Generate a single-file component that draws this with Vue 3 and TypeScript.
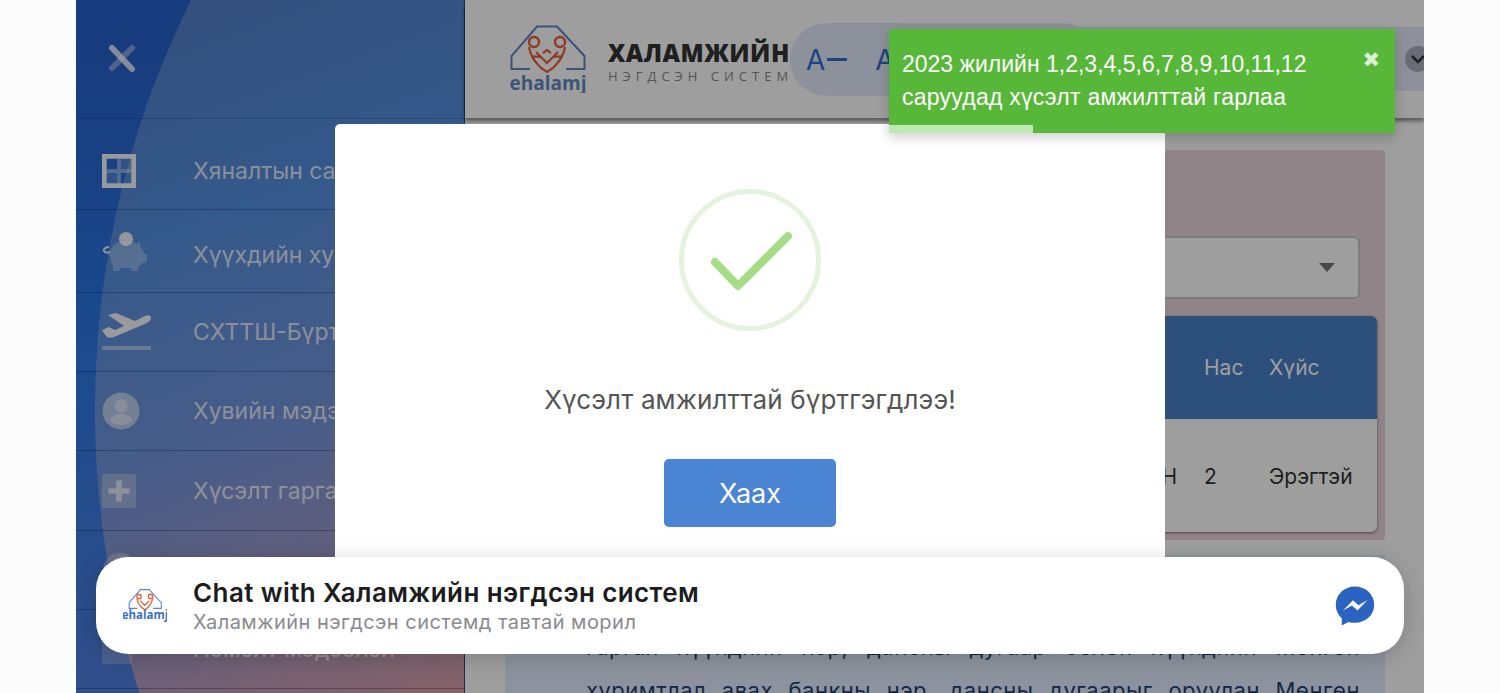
<script setup lang="ts">
const menu = [
  { label: 'Хяналтын самбар', icon: 'grid' },
  { label: 'Хүүхдийн хуримтлал', icon: 'piggy' },
  { label: 'СХТТШ-Бүртгэл', icon: 'plane' },
  { label: 'Хувийн мэдээлэл', icon: 'user' },
  { label: 'Хүсэлт гаргах', icon: 'plus' },
  { label: 'Тусламж', icon: 'help' },
  { label: 'Нэмэлт мэдээлэл', icon: 'info' },
];
</script>

<template>
  <div class="screen">
    <div class="page">
      <aside class="sidebar">
        <div class="arc"></div>
        <div class="side-head">
          <svg width="30" height="30" viewBox="0 0 30 30">
            <path d="M25 4 L5 24" stroke="#fff" stroke-opacity=".4" stroke-width="6" stroke-linecap="round" />
            <path d="M5 4 L25 25" stroke="#fff" stroke-opacity=".8" stroke-width="6" stroke-linecap="round" />
          </svg>
        </div>
        <div v-for="item in menu" :key="item.label" class="side-row">
          <span class="side-icon">
            <svg v-if="item.icon === 'grid'" width="34" height="34" viewBox="0 0 36 36">
              <path fill="#fff" fill-opacity=".95" fill-rule="evenodd" d="M0 0h36v36H0z M5 5v26h26V5z" />
              <path fill="#fff" fill-opacity=".45" d="M16 5h4v26h-4z M5 16h11v4H5z M20 16h11v4H20z" />
              <path fill="#fff" fill-opacity=".18" d="M20 5h11v11H20z M5 20h11v11H5z" />
            </svg>
            <svg v-else-if="item.icon === 'piggy'" class="piggy" width="46" height="40" viewBox="0 0 46 40">
              <circle cx="24" cy="7" r="7" fill="#fff" fill-opacity=".9" />
              <path fill="#fff" fill-opacity=".32" d="M8 21C9 13 16 9 24 9c5 0 8 1 11 3l3-3 1 8c2 1 3 3 3 5h3v8l-5 1c-1 2-2 3-4 4v4h-7v-3H18v3h-7v-5c-2-3-3-7-3-14z" />
              <path d="M7 15c-3 0-6 2-5 4 1 2 3 2 6 1" fill="none" stroke="#fff" stroke-opacity=".9" stroke-width="2" />
            </svg>
            <svg v-else-if="item.icon === 'plane'" width="50" height="38" viewBox="0 0 50 38">
              <path fill="#fff" fill-opacity=".95" d="M0 17l7-3 6 3 9-4L6 2l8-2 19 8 10-5q6-2 6 2 0 3-6 6L12 24q-6 2-8-1z" />
              <rect x="0" y="33" width="49" height="4" fill="#fff" fill-opacity=".45" />
            </svg>
            <svg v-else-if="item.icon === 'user'" width="38" height="38" viewBox="0 0 38 38">
              <circle cx="19" cy="19" r="18.500" fill="#fff" fill-opacity=".55" />
              <circle cx="19" cy="14" r="6.500" fill="#fff" fill-opacity=".5" />
              <path d="M8 28c2-5 7-6 11-6s9 1 11 6c-3 4-7 5-11 5s-8-1-11-5z" fill="#fff" fill-opacity=".5" />
            </svg>
            <svg v-else-if="item.icon === 'plus'" width="34" height="34" viewBox="0 0 36 36">
              <rect width="36" height="36" rx="3" fill="#fff" fill-opacity=".3" />
              <path d="M15 7h6v8h8v6h-8v8h-6v-8H7v-6h8z" fill="#fff" fill-opacity=".7" />
            </svg>
            <svg v-else-if="item.icon === 'help'" width="36" height="36" viewBox="0 0 36 36">
              <circle cx="18" cy="18" r="17" fill="#fff" fill-opacity=".35" />
            </svg>
            <svg v-else width="30" height="30" viewBox="0 0 30 30">
              <rect width="30" height="30" rx="2" fill="#fff" fill-opacity=".25" />
              <rect x="5" y="9" width="4" height="4" fill="#fff" fill-opacity=".7" />
              <rect x="12" y="10" width="12" height="2" fill="#000" fill-opacity=".3" />
            </svg>
          </span>
          <span class="side-label">{{ item.label }}</span>
        </div>
      </aside>

      <main class="main">
        <header class="topbar">
          <svg class="logo" width="76" height="68" viewBox="0 0 76 68">
            <path d="M20 44H1.500V31L27 1.500H47L74.500 31V44H56" fill="none" stroke="#5f86c4" stroke-width="2" />
            <circle cx="24" cy="17" r="5" fill="none" stroke="#e8603a" stroke-width="2.500" />
            <circle cx="50" cy="17" r="5" fill="none" stroke="#e8603a" stroke-width="2.500" />
            <path d="M19 22c2 13 9 17 12 21l6 4 6-4c3-4 10-8 12-21M26 27l11 11 11-11M32 33c-3-3-6 0-9-2M42 33c3-3 6 0 9-2M33 28l4-3 4 3" fill="none" stroke="#e8603a" stroke-width="2.200" />
            <text x="38" y="65" text-anchor="middle" class="logo-word">ehalamj</text>
          </svg>
          <div class="brand">
            <div class="brand-name">ХАЛАМЖИЙН</div>
            <div class="brand-sub">НЭГДСЭН СИСТЕМ</div>
          </div>
          <div class="font-pill">
            <span class="font-btn">A<i class="minus"></i></span>
            <span class="font-btn">A</span>
          </div>
          <div class="user-pill">
            <span class="chevron">
              <svg width="20" height="20" viewBox="0 0 20 20">
                <path d="M4 7l6 6 6-6" fill="none" stroke="#333" stroke-width="2.500" />
              </svg>
            </span>
          </div>
        </header>

        <section class="content">
          <div class="panel">
            <div class="select"><span class="caret"></span></div>
            <div class="table">
              <div class="table-head">
                <span class="col-age">Нас</span>
                <span class="col-sex">Хүйс</span>
              </div>
              <div class="table-row">
                <span class="col-name">Н</span>
                <span class="col-age">2</span>
                <span class="col-sex">Эрэгтэй</span>
              </div>
            </div>
          </div>
          <div class="note">
            <p>гаргах хүүхдийн нэр, дансны дугаар бөлөн хүүхдийн Мөнгөн</p>
            <p>хуримтлал авах банкны нэр, дансны дугаарыг оруулан Мөнгөн</p>
          </div>
        </section>
      </main>

      <div class="backdrop"></div>

      <div class="modal">
        <svg width="142" height="142" viewBox="0 0 142 142">
          <circle cx="71" cy="71" r="68.500" fill="none" stroke="#e5f3dc" stroke-width="5" />
          <path d="M36 73 L59 97 L109 47" fill="none" stroke="#a5dc86" stroke-width="8" stroke-linecap="round" stroke-linejoin="round" />
        </svg>
        <div class="modal-text">Хүсэлт амжилттай бүртгэгдлээ!</div>
        <button class="modal-btn">Хаах</button>
      </div>

      <div class="toast">
        <div class="toast-text">2023 жилийн 1,2,3,4,5,6,7,8,9,10,11,12</div>
        <div class="toast-text toast-line2">саруудад хүсэлт амжилттай гарлаа</div>
        <span class="toast-close">✖</span>
        <div class="toast-bar"></div>
      </div>

      <div class="chat">
        <svg class="chat-logo" width="44" height="36" viewBox="0 0 44 36">
          <g transform="translate(5.500 1) scale(.44)">
            <path d="M20 44H1.500V31L27 1.500H47L74.500 31V44H56" fill="none" stroke="#5f86c4" stroke-width="2.500" />
            <circle cx="24" cy="17" r="5" fill="none" stroke="#e8603a" stroke-width="3" />
            <circle cx="50" cy="17" r="5" fill="none" stroke="#e8603a" stroke-width="3" />
            <path d="M19 22c2 13 9 17 12 21l6 4 6-4c3-4 10-8 12-21M27 27l10 10 10-10" fill="none" stroke="#e8603a" stroke-width="3" />
          </g>
          <text x="22" y="31" text-anchor="middle" class="chat-word">ehalamj</text>
        </svg>
        <div class="chat-body">
          <div class="chat-title">Chat with Халамжийн нэгдсэн систем</div>
          <div class="chat-sub">Халамжийн нэгдсэн системд тавтай морил</div>
        </div>
        <svg width="40" height="40" viewBox="0 0 40 40">
          <path fill="#2a63c0" d="M20 .5C9.200.5 .8 8.300 .8 18.800c0 5.400 2.300 10.200 6 13.500v7.200l6.500-3.600c2.100.6 4.400.9 6.700.9 10.800 0 19.200-7.800 19.200-18S30.800.5 20 .5z" />
          <path fill="#fff" d="M8 24.500l10-10.300 5.500 5 9-5.200-10 10.600-5.500-5.200z" />
        </svg>
      </div>
    </div>
  </div>
</template>

<style scoped>
.screen {
  display: flex;
  justify-content: center;
  height: 693px;
  overflow: hidden;
  background: #fcfcfc;
  font-family: Inter, "Noto Sans", sans-serif;
}
.page {
  position: relative;
  display: flex;
  width: 1348px;
  height: 693px;
  overflow: hidden;
  background: #fff;
}

.sidebar {
  position: relative;
  flex: 0 0 389px;
  box-sizing: border-box;
  overflow: hidden;
  background: linear-gradient(180deg, #265fc8 0%, #2c78e8 50%, #5080e0 100%);
  border-right: 1px solid #2c4a78;
}
.arc {
  position: absolute;
  inset: 0;
  clip-path: circle(923px at 942px 410px);
  background: linear-gradient(160deg, #5480c8 0%, #5590e0 32%, #7596dc 60%, #a59ac8 80%, #dba0a8 100%);
}
.side-head {
  position: relative;
  display: flex;
  align-items: center;
  box-sizing: border-box;
  height: 119px;
  padding-left: 31px;
  border-bottom: 1px solid rgba(0, 20, 60, 0.2);
}
.side-row {
  position: relative;
  display: grid;
  grid-template-columns: 91px 1fr;
  align-items: center;
  box-sizing: border-box;
  height: 79px;
  padding-left: 26px;
  border-bottom: 1px solid rgba(0, 20, 60, 0.3);
  color: #fff;
}
.side-head + .side-row {
  height: 91px;
  padding-top: 14px;
}
.side-head + .side-row + .side-row {
  height: 83px;
  padding-top: 8px;
}
.side-row:nth-child(7) {
  height: 80px;
}
.side-icon {
  display: flex;
  align-items: center;
}
.piggy {
  margin-top: -6px;
}
.side-label {
  font-size: 23px;
  opacity: 0.8;
  white-space: nowrap;
}

.main {
  flex: 1;
  display: flex;
  flex-direction: column;
  min-width: 0;
  background: #fff;
}
.topbar {
  position: relative;
  display: flex;
  align-items: flex-start;
  flex: 0 0 118px;
  box-sizing: border-box;
  padding: 25px 0 0 45px;
  background: #fff;
  box-shadow: 0 3px 4px rgba(0, 0, 0, 0.45);
}
.logo {
  flex: none;
}
.logo-word {
  font-family: "Open Sans", sans-serif;
  font-size: 19px;
  font-weight: 700;
  fill: #5f86c4;
}
.chat-word {
  font-family: "Open Sans", sans-serif;
  font-size: 11.500px;
  font-weight: 700;
  fill: #3a6fc8;
}
.brand {
  margin: 14px 0 0 22px;
  width: 184px;
  flex: none;
  white-space: nowrap;
  font-family: "Open Sans", sans-serif;
}
.brand-name {
  font-size: 24px;
  line-height: 28px;
  font-weight: 800;
  letter-spacing: 0.5px;
  color: #333;
}
.brand-sub {
  margin-top: 1px;
  font-size: 13px;
  line-height: 16px;
  font-weight: 500;
  letter-spacing: 5px;
  color: #888;
}
.font-pill {
  display: flex;
  align-items: center;
  gap: 28px;
  flex: none;
  width: 310px;
  height: 73px;
  margin: -2px 0 0 -2px;
  padding-left: 16px;
  box-sizing: border-box;
  border-radius: 37px;
  background: #e2ebfb;
}
.font-btn {
  display: flex;
  align-items: center;
  gap: 2px;
  font-size: 28px;
  color: #2f6ecf;
}
.minus {
  width: 20px;
  height: 3px;
  background: #2f6ecf;
}
.user-pill {
  display: flex;
  align-items: center;
  justify-content: flex-end;
  flex: 1;
  height: 64px;
  margin: 2px 0 0 -66px;
  border-radius: 32px 0 0 32px;
  background: #e2ebfb;
}
.chevron {
  display: flex;
  align-items: center;
  justify-content: center;
  width: 26px;
  height: 26px;
  margin-right: -7px;
  border-radius: 50%;
  background: #a8aebb;
}

.content {
  display: flex;
  flex-direction: column;
  gap: 15px;
  padding: 32px 39px 0 40px;
}
.panel {
  height: 390px;
  padding-top: 86px;
  box-sizing: border-box;
  border-radius: 4px;
  background: #ebd5de;
}
.select {
  display: flex;
  align-items: center;
  justify-content: flex-end;
  box-sizing: border-box;
  height: 63px;
  margin-right: 25px;
  padding-right: 23px;
  border: 2px solid #c9c9c9;
  border-radius: 6px;
  background: #fff;
}
.caret {
  width: 0;
  height: 0;
  border-left: 8px solid transparent;
  border-right: 8px solid transparent;
  border-top: 9px solid #777;
}
.table {
  margin: 17px 8px 0 0;
  border-radius: 6px;
  overflow: hidden;
  background: #fff;
  box-shadow: 0 1px 3px rgba(0, 0, 0, 0.5);
}
.table-head,
.table-row {
  display: grid;
  grid-template-columns: 1fr 65px 108px;
  align-items: center;
  font-size: 21px;
}
.table-head {
  height: 103px;
  background: #4880c8;
  color: #fff;
}
.table-row {
  height: 113px;
  padding-top: 2px;
  box-sizing: border-box;
  color: #333;
}
.col-name {
  text-align: right;
  padding-right: 27px;
}
.col-age {
  grid-column: 2;
}
.col-sex {
  grid-column: 3;
}
.note {
  flex: 1;
  padding: 80px 25px 0 81px;
  background: #e4eeff;
  font-size: 22px;
  color: #1c3f70;
  letter-spacing: 0.5px;
}
.note p {
  margin: 0 0 19px;
  line-height: 24px;
  text-align: justify;
  text-align-last: justify;
  white-space: nowrap;
}

.backdrop {
  position: absolute;
  inset: 0;
  background: rgba(0, 0, 0, 0.38);
}
.modal {
  position: absolute;
  z-index: 2;
  left: 259px;
  top: 124px;
  display: flex;
  flex-direction: column;
  align-items: center;
  width: 830px;
  height: 480px;
  box-sizing: border-box;
  padding-top: 65px;
  border-radius: 5px;
  background: #fff;
}
.modal-text {
  margin-top: 49px;
  font-size: 26px;
  line-height: 40px;
  letter-spacing: 0.14px;
  color: #545454;
  white-space: nowrap;
}
.modal-btn {
  width: 172px;
  height: 68px;
  margin-top: 39px;
  border: none;
  border-radius: 5px;
  background: #4a84d2;
  color: #fff;
  font-family: inherit;
  font-size: 27px;
}

.toast {
  position: absolute;
  z-index: 3;
  left: 813px;
  top: 29px;
  width: 506px;
  height: 104px;
  box-sizing: border-box;
  padding: 19px 0 0 13px;
  background: #57b738;
  box-shadow: 0 4px 12px rgba(0, 0, 0, 0.2);
  color: #fff;
}
.toast-text {
  font-family: "Liberation Sans", Arial, sans-serif;
  font-size: 23px;
  line-height: 33px;
  white-space: nowrap;
}
.toast-line2 {
  letter-spacing: 0.25px;
}
.toast-close {
  position: absolute;
  right: 15px;
  top: 19px;
  font-family: "DejaVu Sans", sans-serif;
  font-size: 21px;
  line-height: 24px;
  opacity: 0.8;
}
.toast-bar {
  position: absolute;
  left: 0;
  bottom: 0;
  width: 144px;
  height: 8px;
  background: #bfe9b3;
}

.chat {
  position: absolute;
  z-index: 3;
  left: 20px;
  top: 557px;
  display: flex;
  align-items: center;
  width: 1308px;
  height: 97px;
  box-sizing: border-box;
  padding: 0 29px 0 27px;
  border-radius: 32px;
  background: #fff;
  box-shadow: 0 4px 22px rgba(0, 0, 0, 0.18);
}
.chat-logo {
  flex: none;
}
.chat-body {
  flex: 1;
  margin-left: 26px;
  white-space: nowrap;
}
.chat-title {
  font-size: 26px;
  line-height: 32px;
  font-weight: 600;
  letter-spacing: 0.4px;
  color: #1c1c1e;
}
.chat-sub {
  font-size: 20px;
  line-height: 26px;
  letter-spacing: 0.47px;
  color: #8a8a8e;
}
</style>
